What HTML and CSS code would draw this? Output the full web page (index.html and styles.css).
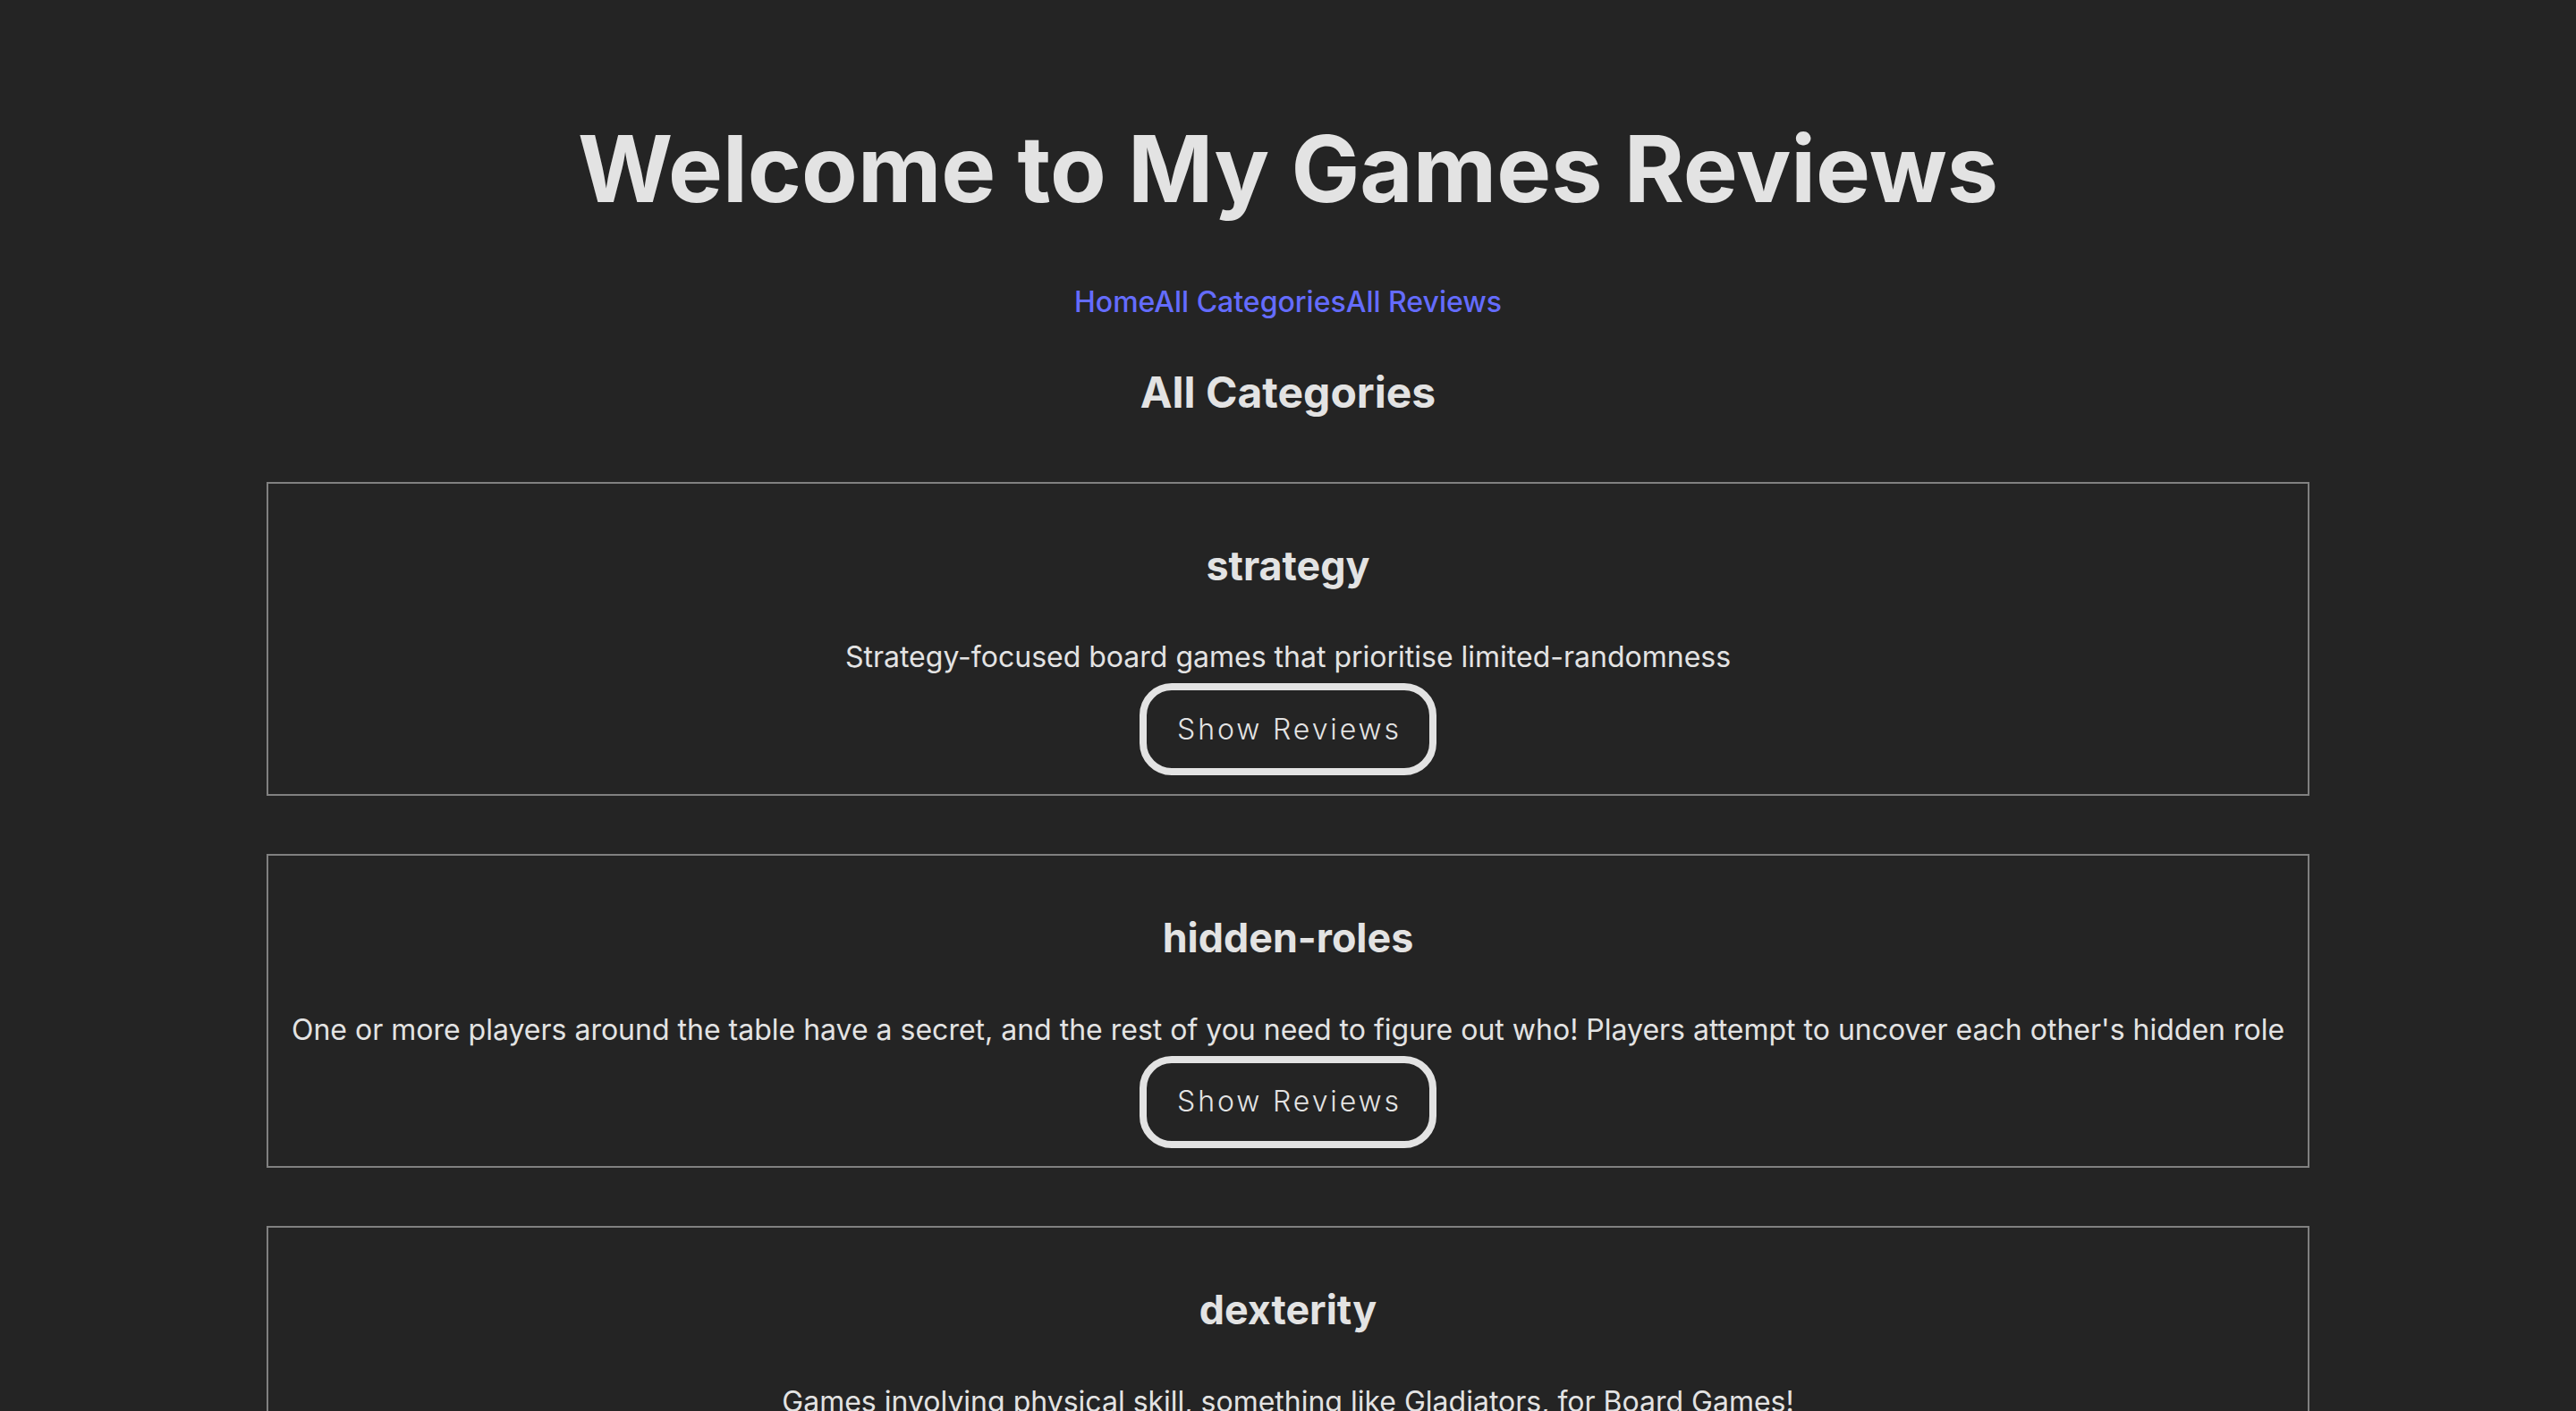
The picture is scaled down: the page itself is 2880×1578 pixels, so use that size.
FILE: index.html
```html
<!DOCTYPE html>
<html lang="en">
<head>
<meta charset="utf-8">
<title>My Games Reviews</title>
<link rel="stylesheet" href="styles.css">
</head>
<body>
<div class="app">
  <header class="site-header">
    <h1 class="site-title">Welcome to My Games Reviews</h1>
    <nav class="site-nav"><a href="#">Home</a><a href="#">All Categories</a><a href="#">All Reviews</a></nav>
  </header>
  <main class="content">
    <h2 class="page-title">All Categories</h2>
    <ul class="category-list">
      <li class="category-card">
        <h3 class="category-name">strategy</h3>
        <p class="category-desc">Strategy-focused board games that prioritise limited-randomness</p>
        <button class="show-btn" type="button">Show Reviews</button>
      </li>
      <li class="category-card">
        <h3 class="category-name">hidden-roles</h3>
        <p class="category-desc">One or more players around the table have a secret, and the rest of you need to figure out who! Players attempt to uncover each other's hidden role</p>
        <button class="show-btn" type="button">Show Reviews</button>
      </li>
      <li class="category-card">
        <h3 class="category-name">dexterity</h3>
        <p class="category-desc">Games involving physical skill, something like Gladiators, for Board Games!</p>
        <button class="show-btn" type="button">Show Reviews</button>
      </li>
    </ul>
  </main>
</div>
</body>
</html>
```
FILE: styles.css
```css
* {
  box-sizing: border-box;
}

html,
body {
  margin: 0;
}

body {
  background: #242424;
  color: #e3e3e3;
  font-family: Inter, "Noto Sans", "Liberation Sans", sans-serif;
  font-size: 32px;
  line-height: 1.5;
  font-weight: 400;
  display: flex;
  justify-content: center;
  min-height: 100vh;
}

.app {
  padding: 64px;
  text-align: center;
}

.site-title {
  font-size: 102.4px;
  line-height: 1.1;
  font-weight: 700;
  margin: 68.6px 0;
}

.site-nav {
  line-height: 48px;
}

.site-nav a {
  color: #646cff;
  font-weight: 500;
  text-decoration: none;
}

.page-title {
  font-size: 48px;
  line-height: 72px;
  font-weight: 700;
  margin: 41px 0 0;
}

.category-list {
  list-style: none;
  margin: 64px 0 0;
  padding: 0;
  display: flex;
  flex-direction: column;
  gap: 65px;
}

.category-card {
  border: 2px solid #808080;
  padding: 0 26px 20.5px;
  display: flex;
  flex-direction: column;
  align-items: center;
}

.category-name {
  font-size: 44.8px;
  line-height: 67.2px;
  font-weight: 700;
  margin: 59px 0 44.4px;
}

.category-desc {
  margin: 0 0 5px;
  line-height: 48px;
}

.show-btn {
  font-family: inherit;
  font-size: 32px;
  line-height: 48px;
  font-weight: 300;
  letter-spacing: 2.9px;
  color: #e3e3e3;
  background: transparent;
  border: 8px solid #e3e3e3;
  border-radius: 36px;
  padding: 19.5px 31px 19.5px 34px;
  cursor: pointer;
}
```
